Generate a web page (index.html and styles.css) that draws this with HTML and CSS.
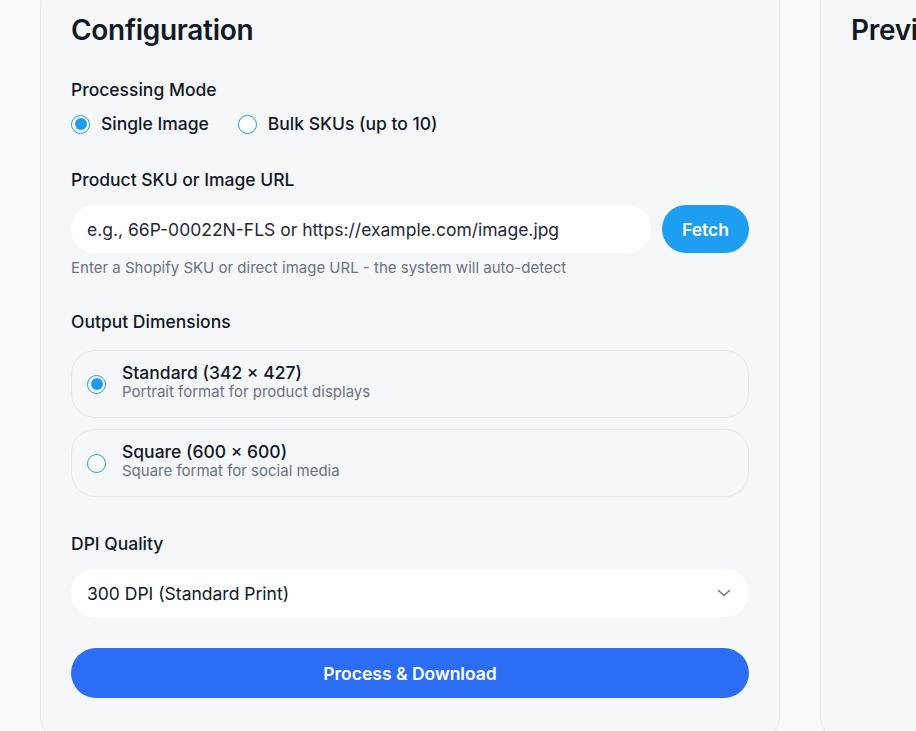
FILE: index.html
```html
<!DOCTYPE html>
<html lang="en">
<head>
<meta charset="utf-8">
<title>Configuration</title>
<link rel="stylesheet" href="styles.css">
</head>
<body>
<main class="layout">
  <section class="card config">
    <h2 class="card-title">Configuration</h2>

    <div class="field">
      <div class="label">Processing Mode</div>
      <div class="mode-row">
        <label class="radio-opt"><span class="radio checked"></span><span>Single Image</span></label>
        <label class="radio-opt"><span class="radio"></span><span>Bulk SKUs (up to 10)</span></label>
      </div>
    </div>

    <div class="field">
      <div class="label">Product SKU or Image URL</div>
      <div class="input-row">
        <div class="input">e.g., 66P-00022N-FLS or https://example.com/image.jpg</div>
        <button class="fetch">Fetch</button>
      </div>
      <div class="help">Enter a Shopify SKU or direct image URL - the system will auto-detect</div>
    </div>

    <div class="field">
      <div class="label">Output Dimensions</div>
      <div class="options">
        <div class="option">
          <span class="radio checked"></span>
          <div class="option-text">
            <div class="option-title">Standard (342 × 427)</div>
            <div class="option-sub">Portrait format for product displays</div>
          </div>
        </div>
        <div class="option">
          <span class="radio"></span>
          <div class="option-text">
            <div class="option-title">Square (600 × 600)</div>
            <div class="option-sub">Square format for social media</div>
          </div>
        </div>
      </div>
    </div>

    <div class="field dpi">
      <div class="label">DPI Quality</div>
      <div class="select">
        <span>300 DPI (Standard Print)</span>
        <svg class="chev" width="14" height="14" viewBox="0 0 14 14"><path d="M1.5 4.5l5.5 5 5.5-5" fill="none" stroke="#6b7280" stroke-width="1.4" stroke-linecap="round" stroke-linejoin="round"/></svg>
      </div>
    </div>

    <button class="primary">Process &amp; Download</button>
  </section>

  <section class="card preview">
    <h2 class="card-title">Preview</h2>
  </section>
</main>
</body>
</html>
```

FILE: styles.css
```css
* { box-sizing: border-box; }
html, body { margin: 0; padding: 0; }
body {
  background: #f7f9fb;
  font-family: Inter, "Noto Sans", "Liberation Sans", sans-serif;
  color: #111827;
  overflow: hidden;
  height: 731px;
}
.layout {
  display: grid;
  grid-template-columns: 740px 400px;
  column-gap: 40px;
  padding-left: 40px;
  margin-top: -19px;
}
.card {
  background: #f6f7f8;
  border: 1px solid #e3e8ee;
  border-radius: 24px;
  padding: 30px;
}
.card-title {
  margin: 0;
  font-size: 28px;
  line-height: 36px;
  font-weight: 600;
  letter-spacing: -0.3px;
  color: #111827;
}
.field { margin-top: 30px; }
.field + .field { margin-top: 32px; }
.label {
  font-size: 17.5px;
  line-height: 24px;
  font-weight: 500;
  margin-bottom: 13px;
}
.mode-row {
  display: flex;
  gap: 29px;
  margin-top: -3px;
}
.radio-opt {
  display: flex;
  align-items: center;
  gap: 11px;
  font-size: 17.5px;
  line-height: 24px;
  font-weight: 500;
}
.radio {
  flex: none;
  width: 19px;
  height: 19px;
  border-radius: 50%;
  border: 1.5px solid #1d9bf0;
  background: #fff;
  position: relative;
}
.radio.checked::after {
  content: "";
  position: absolute;
  left: 50%;
  top: 50%;
  width: 12px;
  height: 12px;
  margin: -6px 0 0 -6px;
  border-radius: 50%;
  background: #1d9bf0;
}
.input-row {
  display: flex;
  gap: 11px;
}
.input {
  flex: 1;
  height: 48px;
  background: #fff;
  border-radius: 24px;
  padding: 0 16px;
  display: flex;
  align-items: center;
  font-size: 17.5px;
  color: #1f2937;
}
.fetch {
  flex: none;
  width: 87px;
  height: 48px;
  border: 0;
  border-radius: 24px;
  background: #1e9ef0;
  color: #fff;
  font-family: inherit;
  font-size: 17.5px;
  font-weight: 600;
}
.help {
  margin-top: 5px;
  font-size: 15px;
  line-height: 20px;
  color: #6b7280;
}
.options {
  display: flex;
  flex-direction: column;
  gap: 11px;
  margin-top: 16px;
}
.option {
  display: flex;
  align-items: center;
  gap: 16px;
  border: 1px solid #e3e8ee;
  border-radius: 24px;
  padding: 12px 15px;
}
.option-text { margin-bottom: 4px; }
.option-title {
  font-size: 17.5px;
  line-height: 20px;
  font-weight: 500;
}
.option-sub {
  font-size: 15px;
  line-height: 18px;
  color: #6b7280;
}
.field.dpi { margin-top: 35px; }
.select {
  height: 48px;
  background: #fff;
  border-radius: 24px;
  padding: 0 18px 0 16px;
  display: flex;
  align-items: center;
  justify-content: space-between;
  font-size: 17.5px;
}
.primary {
  display: block;
  width: 100%;
  margin-top: 31px;
  height: 50px;
  border: 0;
  border-radius: 25px;
  background: #2b6ef3;
  color: #fff;
  font-family: inherit;
  font-size: 17.5px;
  font-weight: 600;
}
.preview { min-height: 760px; }
```
